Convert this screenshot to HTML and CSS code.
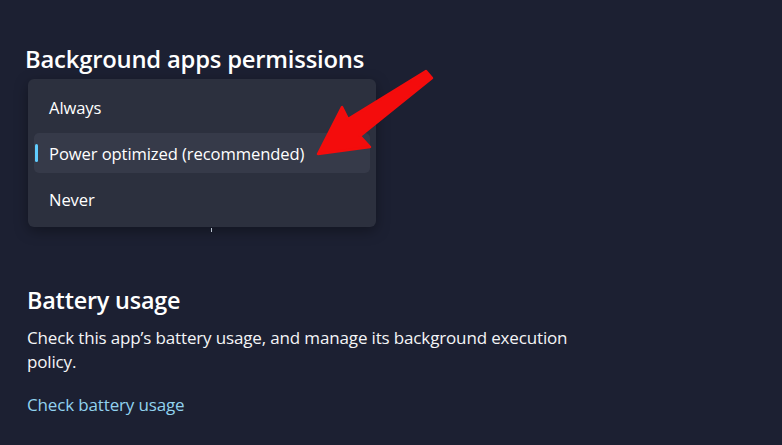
FILE: index.html
```html
<!DOCTYPE html>
<html lang="en">
<head>
<meta charset="utf-8">
<title>Background apps permissions</title>
<link rel="stylesheet" href="styles.css">
</head>
<body>
<div class="page">
  <section class="perm">
    <h2 class="title">Background apps permissions</h2>
    <div class="combo-space"></div>
  </section>
  <section class="battery">
    <h2 class="title small">Battery usage</h2>
    <p class="desc">Check this app’s battery usage, and manage its background execution policy.</p>
    <a class="link" href="#">Check battery usage</a>
  </section>

  <div class="menu">
    <div class="item">Always</div>
    <div class="item selected"><span class="indicator"></span>Power optimized (recommended)</div>
    <div class="item">Never</div>
  </div>
  <span class="tick"></span>

  <svg class="arrow" width="130" height="100" viewBox="310 62 130 100" aria-hidden="true">
    <polygon points="426,71 348,119 342,107 318,154 370,147 360,136 432,78" fill="#f40c0c" stroke="#f40c0c" stroke-width="2.5" stroke-linejoin="round"/>
  </svg>
</div>
</body>
</html>
```
FILE: styles.css
```css
html, body {
  margin: 0;
  padding: 0;
  background: #1c2032;
}
body {
  font-family: "Open Sans", "Noto Sans", "DejaVu Sans", sans-serif;
  color: #ffffff;
  width: 782px;
  height: 445px;
  overflow: hidden;
}
.page {
  position: relative;
  width: 782px;
  height: 445px;
  padding: 41px 0 0 25px;
  box-sizing: border-box;
}
.title {
  margin: 0;
  font-size: 23.8px;
  font-weight: 600;
  line-height: 36px;
  letter-spacing: -0.2px;
}
.title.small {
  font-size: 23.4px;
}
.combo-space {
  height: 205px;
}
.battery {
  padding-left: 2px;
  display: flex;
  flex-direction: column;
  align-items: flex-start;
}
.desc {
  margin: 8px 0 0;
  width: 560px;
  font-size: 17px;
  line-height: 24px;
  letter-spacing: -0.15px;
  color: #f4f5f7;
}
.link {
  margin-top: 19px;
  color: #91d2ef;
  font-size: 17px;
  line-height: 24px;
  letter-spacing: -0.15px;
  text-decoration: none;
}
.menu {
  position: absolute;
  left: 28px;
  top: 79px;
  width: 348px;
  height: 148px;
  box-sizing: border-box;
  padding: 8px 6px;
  background: #2c303e;
  border-radius: 6px;
  box-shadow: 0 4px 14px rgba(0,0,0,0.35);
  display: flex;
  flex-direction: column;
  gap: 6px;
}
.item {
  position: relative;
  height: 40px;
  box-sizing: border-box;
  padding: 1px 0 0 15px;
  border-radius: 5px;
  display: flex;
  align-items: center;
  font-size: 16.6px;
  color: #ffffff;
  letter-spacing: -0.1px;
}
.item.selected {
  background: #363a49;
}
.indicator {
  position: absolute;
  left: 1px;
  top: 11px;
  width: 3px;
  height: 18px;
  border-radius: 2px;
  background: #60cdff;
}
.tick {
  position: absolute;
  left: 211px;
  top: 228px;
  width: 1px;
  height: 4px;
  background: #b9c3cf;
}
.arrow {
  position: absolute;
  left: 310px;
  top: 62px;
}
```
